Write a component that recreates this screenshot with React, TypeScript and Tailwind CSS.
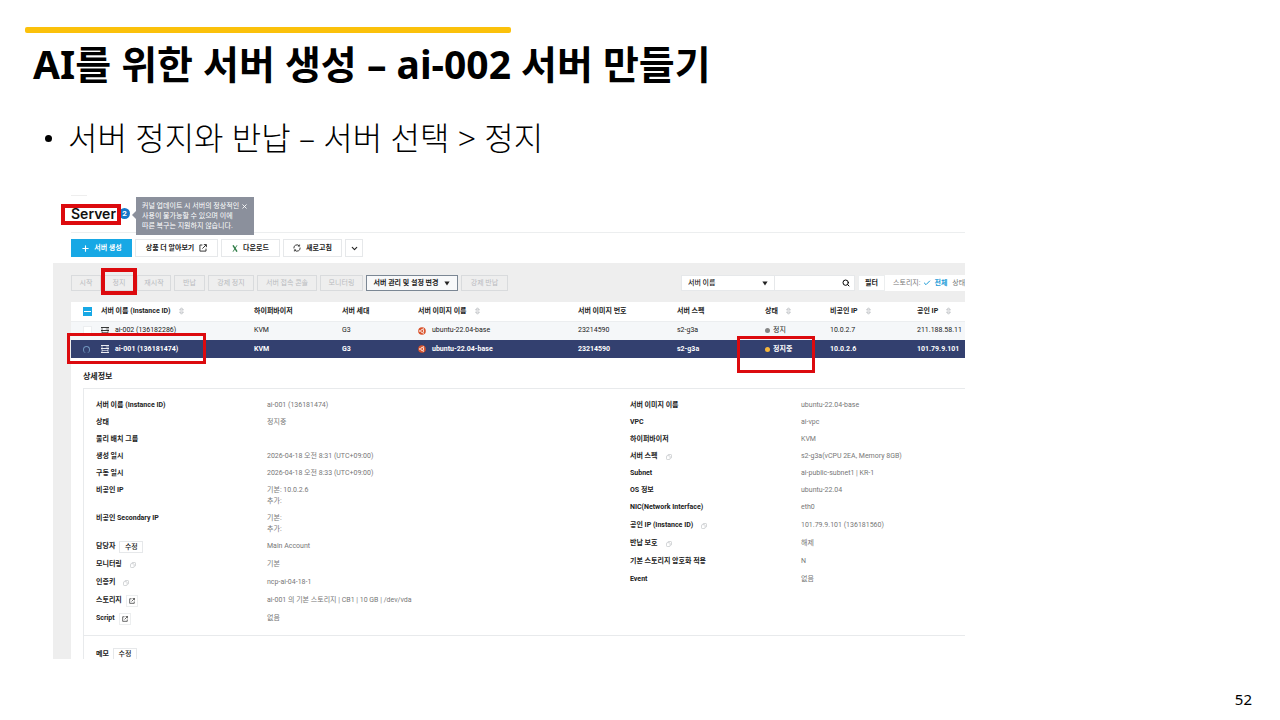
import type { ReactNode } from 'react';
import { Check, ChevronDown, Plus, Search, X } from 'lucide-react';

const columns = [
  { label: '하이퍼바이저', width: 'w-[88px]' },
  { label: '서버 세대', width: 'w-[76px]' },
  { label: '서버 이미지 이름', width: 'w-[160px]', sortable: true },
  { label: '서버 이미지 번호', width: 'w-[99px]' },
  { label: '서버 스펙', width: 'w-[88px]' },
  { label: '상태', width: 'w-[65px]', sortable: true },
  { label: '비공인 IP', width: 'w-[87px]', sortable: true },
  { label: '공인 IP', width: 'w-auto', sortable: true },
];

const servers = [
  { name: 'ai-002 (136182286)', status: '정지', ip: '10.0.2.7', publicIp: '211.188.58.11', selected: false },
  { name: 'ai-001 (136181474)', status: '정지중', ip: '10.0.2.6', publicIp: '101.79.9.101', selected: true },
];

type Detail = { label: string; value?: ReactNode; extra?: 'edit' | 'copy' | 'link'; tall?: boolean };

const leftDetails: Detail[] = [
  { label: '서버 이름 (Instance ID)', value: 'ai-001 (136181474)' },
  { label: '상태', value: '정지중' },
  { label: '물리 배치 그룹' },
  { label: '생성 일시', value: '2026-04-18 오전 8:31 (UTC+09:00)' },
  { label: '구동 일시', value: '2026-04-18 오전 8:33 (UTC+09:00)' },
  { label: '비공인 IP', value: <>기본: 10.0.2.6<br />추가:</> },
  { label: '비공인 Secondary IP', value: <>기본:<br />추가:</> },
  { label: '담당자', value: 'Main Account', extra: 'edit', tall: true },
  { label: '모니터링', value: '기본', extra: 'copy', tall: true },
  { label: '인증키', value: 'ncp-ai-04-18-1', extra: 'copy', tall: true },
  { label: '스토리지', value: 'ai-001 의 기본 스토리지 | CB1 | 10 GB | /dev/vda', extra: 'link', tall: true },
  { label: 'Script', value: '없음', extra: 'link', tall: true },
];

const rightDetails: Detail[] = [
  { label: '서버 이미지 이름', value: 'ubuntu-22.04-base' },
  { label: 'VPC', value: 'ai-vpc' },
  { label: '하이퍼바이저', value: 'KVM' },
  { label: '서버 스펙', value: 's2-g3a(vCPU 2EA, Memory 8GB)', extra: 'copy' },
  { label: 'Subnet', value: 'ai-public-subnet1 | KR-1' },
  { label: 'OS 정보', value: 'ubuntu-22.04' },
  { label: 'NIC(Network Interface)', value: 'eth0', tall: true },
  { label: '공인 IP (Instance ID)', value: '101.79.9.101 (136181560)', extra: 'copy', tall: true },
  { label: '반납 보호', value: '해제', extra: 'copy', tall: true },
  { label: '기본 스토리지 암호화 적용', value: 'N', tall: true },
  { label: 'Event', value: '없음', tall: true },
];

function SortIcon() {
  return (
    <svg width="5" height="8" viewBox="0 0 5 8" fill="none" stroke="#a9adb1" strokeWidth="0.7" className="ml-2 inline-block shrink-0">
      <path d="M0.6 3 2.5 0.8 4.4 3zM0.6 5 2.5 7.2 4.4 5z" />
    </svg>
  );
}

function ServerIcon() {
  return (
    <svg width="8" height="8" viewBox="0 0 8 8" fill="none" stroke="currentColor" className="shrink-0">
      <path d="M0 0.5h8M0 3.5h8M0 7.5h8" strokeWidth="0.9" />
      <path d="M1 0.5v7M7 0.5v7" strokeWidth="0.6" />
      <path d="M1 5.5h6M4.8 2h1.4" strokeWidth="0.6" />
    </svg>
  );
}

function UbuntuIcon() {
  return (
    <svg width="8" height="8" viewBox="0 0 8 8" className="shrink-0">
      <circle cx="4" cy="4" r="3.8" fill="#d9532c" />
      <circle cx="4.2" cy="4" r="1.5" fill="none" stroke="#fff" strokeWidth="0.8" />
      <circle cx="1.7" cy="4" r="0.7" fill="#fff" />
      <circle cx="5.3" cy="1.9" r="0.7" fill="#fff" />
      <circle cx="5.3" cy="6.1" r="0.7" fill="#fff" />
    </svg>
  );
}

function CopyIcon() {
  return (
    <svg width="6" height="6" viewBox="0 0 6 6" fill="none" stroke="#b9bcc0" strokeWidth="0.6">
      <rect x="0.5" y="1.7" width="3.6" height="3.8" rx="0.8" />
      <path d="M1.9 1.5V1.1q0-.6.6-.6h2.3q.7 0 .7.7v2.3q0 .7-.7.7h-.4" />
    </svg>
  );
}

function ExternalIcon({ size }: { size: number }) {
  return (
    <svg width={size} height={size} viewBox="0 0 8 8" fill="none" stroke="#222" strokeWidth="0.9">
      <path d="M3.4 1H0.9v6.1H7V4.6M4.8 0.6h2.6v2.6M7.2 0.8 3.4 4.6" />
    </svg>
  );
}

function RefreshIcon() {
  return (
    <svg width="8" height="8" viewBox="0 0 8 8" fill="none" stroke="#222" strokeWidth="0.9">
      <path d="M0.9 4.4A3.1 3.1 0 0 1 6.3 1.9M7.1 3.6A3.1 3.1 0 0 1 1.7 6.1" />
      <path d="M6.6 0.5v1.7H4.9M1.4 7.5V5.8h1.7" strokeWidth="0.7" />
    </svg>
  );
}

function Caret() {
  return (
    <svg width="6" height="5" viewBox="0 0 6 5" className="pointer-events-none shrink-0">
      <path d="M0.4 0.5h5.2L3 4.6z" fill="#222" />
    </svg>
  );
}

// red annotation frame drawn over a part of the console
function Mark({ className }: { className: string }) {
  return <span className={`pointer-events-none absolute z-10 border-[#dc0a0e] ${className}`} />;
}

function ToolButton({ children, className }: { children: ReactNode; className: string }) {
  return (
    <button className={`relative h-4 shrink-0 border border-[#d9dbdd] text-[#b9bbbe] ${className}`}>{children}</button>
  );
}

function EditButton() {
  return <button className="h-3 w-6 border border-[#e6e8ea] bg-white font-medium text-[#222]">수정</button>;
}

function DetailList({ items }: { items: Detail[] }) {
  return (
    <dl>
      {items.map(item => (
        <div key={item.label} className={`flex py-[3px] leading-[11px] ${item.tall ? 'min-h-[18px]' : 'min-h-[17px]'}`}>
          <dt className="flex h-[11px] w-[171px] shrink-0 items-center font-bold text-[#222]">
            {item.label}
            {item.extra === 'copy' && <button aria-label="복사" className="ml-2"><CopyIcon /></button>}
            {item.extra === 'edit' && <span className="ml-1 flex"><EditButton /></span>}
            {item.extra === 'link' && (
              <a href="#" aria-label={item.label} className="ml-1 flex size-3 items-center justify-center border border-[#eceeef]">
                <ExternalIcon size={6} />
              </a>
            )}
          </dt>
          <dd className="whitespace-nowrap text-[#777]">{item.value}</dd>
        </div>
      ))}
    </dl>
  );
}

function Header() {
  return (
    <header className="relative ml-[18px] flex h-[38px] items-center border-b border-[#eceeef]">
      <span className="absolute left-0 top-0 h-px w-4 bg-[#eee]" />
      <h1 className="relative font-[Inter,sans-serif] text-sm font-semibold text-[#111]">
        Server
        <Mark className="-bottom-px -left-[10px] -right-[5px] top-0 border-4" />
      </h1>
      <span className="ml-[3px] flex size-[11px] items-center justify-center rounded-full bg-[#1677c9] text-[8px] font-bold text-white">2</span>
      <div role="note" className="absolute left-[65px] top-[2px] h-[38px] w-[118px] bg-[#8b909c] px-[6px] py-1 leading-[10px] text-white">
        <span className="absolute -left-1 top-[14px] border-y-4 border-r-4 border-y-transparent border-r-[#8b909c]" />
        <p className="whitespace-nowrap">
          커널 업데이트 시 서버의 정상적인<br />사용이 불가능할 수 있으며 이에<br />따른 복구는 지원하지 않습니다.
        </p>
        <button aria-label="닫기" className="absolute right-[6px] top-[6px]"><X size={7} strokeWidth={3} /></button>
      </div>
    </header>
  );
}

function Actions() {
  const button = 'flex h-[18px] items-center justify-center border border-[#e6e8ea] font-bold text-[#222]';
  return (
    <div className="flex gap-[3px] py-[6px] pl-[18px]">
      <button className="flex h-[18px] w-[61px] items-center justify-center gap-1 bg-[#17a8e5] font-bold text-white">
        <Plus size={9} strokeWidth={3} />서버 생성
      </button>
      <button className={`${button} w-[83px] gap-[5px]`}>
        상품 더 알아보기 <ExternalIcon size={8} />
      </button>
      <button className={`${button} w-[59px] gap-[5px]`}>
        <svg width="6" height="7" viewBox="0 0 6 7" fill="none" stroke="#2f7d46" strokeWidth="1.4">
          <path d="M1 0.3 5 6.7" /><path d="M5 0.3 1 6.7" strokeWidth="0.9" />
        </svg>
        다운로드
      </button>
      <button className={`${button} w-[59px] gap-[5px]`}>
        <RefreshIcon />새로고침
      </button>
      <button aria-label="더보기" className={`${button} w-[18px]`}><ChevronDown size={9} strokeWidth={3} /></button>
    </div>
  );
}

function Toolbar() {
  return (
    <div className="flex h-[39px] items-start pt-3">
      <div className="flex shrink-0 gap-[3px]">
        <ToolButton className="w-[30px]">시작</ToolButton>
        <ToolButton className="w-[30px]">
          정지
          <Mark className="-inset-x-1 -bottom-[5px] -top-2 border-4" />
        </ToolButton>
        <ToolButton className="w-[34px]">재시작</ToolButton>
        <ToolButton className="w-[31px]">반납</ToolButton>
        <ToolButton className="w-[46px]">강제 정지</ToolButton>
        <ToolButton className="w-[60px]">서버 접속 콘솔</ToolButton>
        <ToolButton className="w-[43px]">모니터링</ToolButton>
        <button className="flex h-4 w-[92px] items-center justify-center gap-[6px] border border-[#7b8794] bg-[#f8f9fa] font-bold text-[#222]">
          서버 관리 및 설정 변경 <Caret />
        </button>
        <ToolButton className="w-[47px]">강제 반납</ToolButton>
      </div>
      <div className="ml-auto flex w-[284px] shrink-0 overflow-hidden">
        <label className="flex h-4 w-[94px] shrink-0 items-center border border-[#e6e8ea] bg-white px-[6px]">
          <select aria-label="검색 항목" className="flex-1 appearance-none font-medium text-[#222] outline-none">
            <option>서버 이름</option>
          </select>
          <Caret />
        </label>
        <label className="flex h-4 w-[80px] shrink-0 items-center border-y border-r border-[#e6e8ea] bg-white pr-1">
          <input aria-label="검색어" className="w-0 flex-1 outline-none" />
          <Search size={8} strokeWidth={3} />
        </label>
        <button className="ml-[3px] h-4 w-[27px] shrink-0 border border-[#eceeef] bg-white font-bold text-[#222]">필터</button>
        <div className="flex h-4 shrink-0 items-center whitespace-nowrap bg-white pl-2 text-[#777]">
          스토리지:
          <Check size={8} strokeWidth={3} className="ml-[3px] text-[#1a9bd7]" />
          <span className="ml-[3px] font-bold text-[#1a9bd7]">전체</span>
          <span className="ml-[5px]">상태</span>
        </div>
      </div>
    </div>
  );
}

function ServerTable() {
  return (
    <table className="w-full table-fixed whitespace-nowrap bg-white text-left text-[#222]">
      <thead>
        <tr className="h-[19px] border-b border-[#eceef0]">
          <th className="w-[30px] pl-3">
            <label className="relative flex size-[9px] items-center justify-center bg-[#17a8e5]">
              <input type="checkbox" aria-label="전체 선택" className="absolute inset-0 appearance-none" />
              <span className="h-px w-[7px] bg-white" />
            </label>
          </th>
          <th className="w-[153px]"><span className="flex items-center">서버 이름 (Instance ID)<SortIcon /></span></th>
          {columns.map(col => (
            <th key={col.label} className={col.width}>
              <span className="flex items-center">{col.label}{col.sortable && <SortIcon />}</span>
            </th>
          ))}
        </tr>
      </thead>
      <tbody>
        {servers.map(server => (
          <tr key={server.name} className={server.selected ? 'h-[18px] bg-[#33406f] font-bold text-white' : 'h-[19px] bg-[#f5f7f9]'}>
            <td className="relative pl-3">
              <input
                type="checkbox"
                aria-label={server.name}
                className={server.selected
                  ? 'block size-[7px] appearance-none rounded-sm border border-b-0 border-[#7095bd]'
                  : 'block size-[9px] appearance-none border border-[#eceef0] bg-white'}
              />
              {server.selected && <Mark className="-left-[4px] -top-[7px] h-[31px] w-[139px] border-[3px]" />}
            </td>
            <td><span className="flex items-center gap-[6px]"><ServerIcon />{server.name}</span></td>
            <td>KVM</td>
            <td>G3</td>
            <td><span className="flex items-center gap-[6px]"><UbuntuIcon />ubuntu-22.04-base</span></td>
            <td>23214590</td>
            <td>s2-g3a</td>
            <td className="relative">
              <span className="flex items-center gap-[3px]">
                <span className={`size-[5px] rounded-full ${server.selected ? 'bg-[#f5b63c]' : 'bg-[#858585]'}`} />
                {server.status}
              </span>
              {server.selected && <Mark className="-left-[28px] -top-[4px] h-[37px] w-[78px] border-[3px]" />}
            </td>
            <td>{server.ip}</td>
            <td>{server.publicIp}</td>
          </tr>
        ))}
      </tbody>
    </table>
  );
}

export default function App() {
  return (
    <main className="flex min-h-screen flex-col bg-white font-['Noto_Sans','Noto_Sans_CJK_KR',sans-serif] text-black">
      <div className="ml-[25px] mt-[27px] h-[6px] w-[38%] rounded-xs bg-[#fbc10b]" />
      <h1 className="ml-[33px] mt-[7px] text-[39px] font-bold leading-[48px]">AI를 위한 서버 생성 – ai-002 서버 만들기</h1>
      <ul className="ml-[45px] mt-[30px] text-[32px] font-light leading-[40px]">
        <li className="flex items-center gap-4">
          <span className="size-[7px] rounded-full bg-black" />
          서버 정지와 반납 – 서버 선택 &gt; 정지
        </li>
      </ul>

      <section className="ml-[53px] mr-[315px] mt-[37px] overflow-hidden font-[Roboto,'Noto_Sans_CJK_KR',sans-serif] text-[7px] leading-[11px]">
        <Header />
        <Actions />
        <div className="bg-[#eeeeee] pl-[18px]">
          <Toolbar />
          <ServerTable />
          <div className="bg-white pl-3 pt-[13px]">
            <h2 className="pb-[5px] text-[8px] font-bold leading-3 text-[#222]">상세정보</h2>
            <div className="border-l border-t border-[#e8eaec]">
              <div className="grid grid-cols-[534px_1fr] border-b border-[#e8eaec] pb-[7px] pl-3 pt-2">
                <DetailList items={leftDetails} />
                <DetailList items={rightDetails} />
              </div>
              <div className="flex h-[23px] items-start gap-1 overflow-hidden pl-3 pt-3">
                <span className="font-bold leading-3 text-[#222]">메모</span>
                <EditButton />
              </div>
            </div>
          </div>
        </div>
      </section>

      <footer className="mt-auto pb-[9px] pr-7 text-right text-[15px] leading-6">52</footer>
    </main>
  );
}
